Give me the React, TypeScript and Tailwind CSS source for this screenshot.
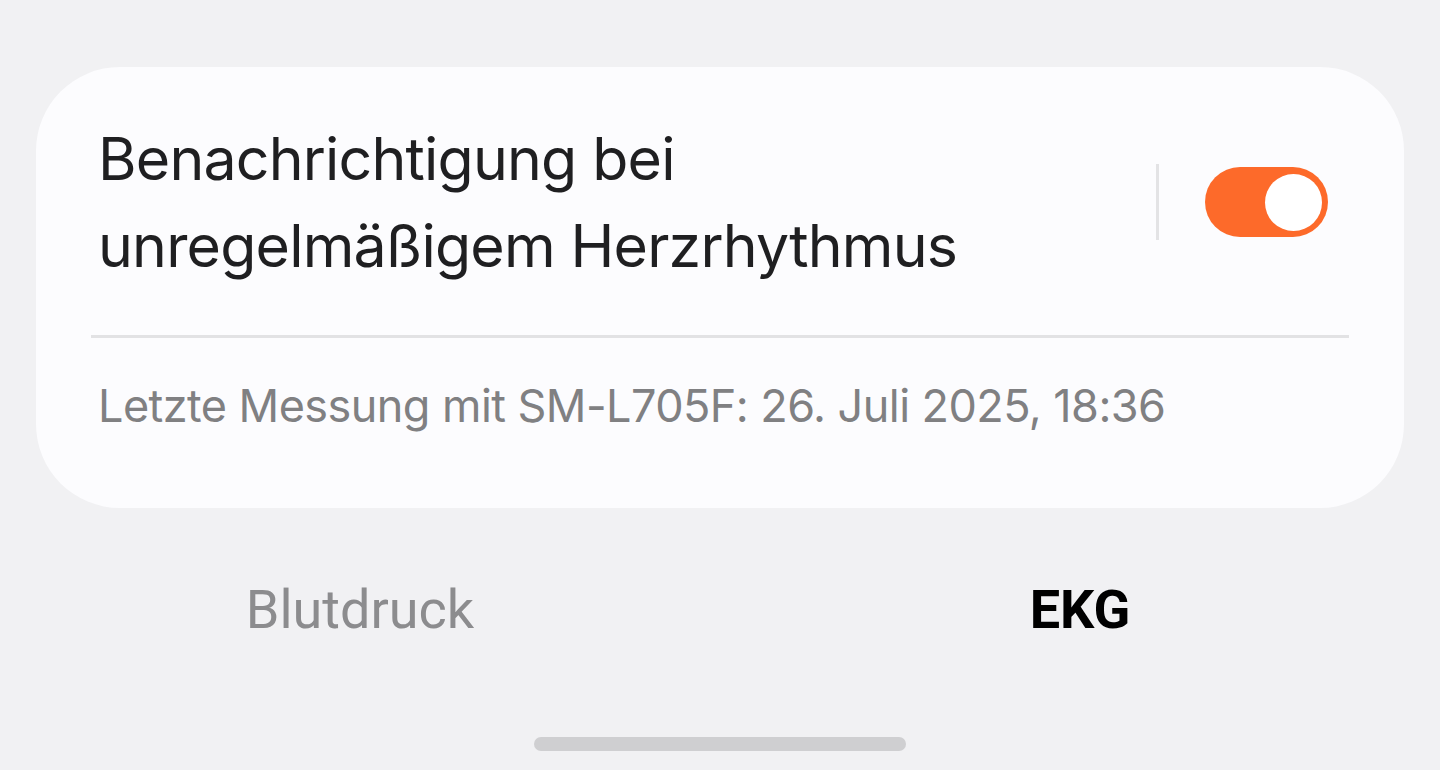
export default function App() {
  return (
    <div className="min-h-[770px] w-[1440px] bg-[#f1f1f3] flex flex-col overflow-hidden" style={{ fontFamily: "Inter, 'Open Sans', sans-serif" }}>
      <div className="mt-[67px] mx-[36px] rounded-[84px] bg-[#fcfcfe] pt-[48px] pb-[75px]">
        <div className="flex items-center pl-[62px] pr-[76px]">
          <div className="flex-1 text-[59px] leading-[87px] text-[#1f1f21] tracking-[-0.8px]">
            Benachrichtigung bei
            <br />
            unregelmäßigem Herzrhythmus
          </div>
          <div className="w-[3px] h-[76px] bg-[#e3e3e5]" />
          <button className="ml-[46px] w-[123px] h-[70px] rounded-full bg-[#fd6a2a] flex items-center justify-end pr-[6px]">
            <span className="w-[57px] h-[57px] rounded-full bg-white" />
          </button>
        </div>
        <div className="mx-[55px] mt-[46px] h-[3px] bg-[#e2e2e4]" />
        <div className="pl-[62px] mt-[41px] text-[45px] leading-[54px] tracking-[-0.55px] text-[#808082]">
          Letzte Messung mit SM-L705F: 26. Juli 2025, 18:36
        </div>
      </div>
      <div className="grid grid-cols-2 mt-[75px] text-[54px] leading-[54px]" style={{ fontFamily: "Roboto, 'Liberation Sans', sans-serif" }}>
        <div className="text-center text-[#8c8c8e]">Blutdruck</div>
        <div className="text-center font-bold text-black">EKG</div>
      </div>
      <div className="mt-[100px] mx-auto w-[372px] h-[14px] rounded-full bg-[#cfcfd1]" />
    </div>
  );
}
